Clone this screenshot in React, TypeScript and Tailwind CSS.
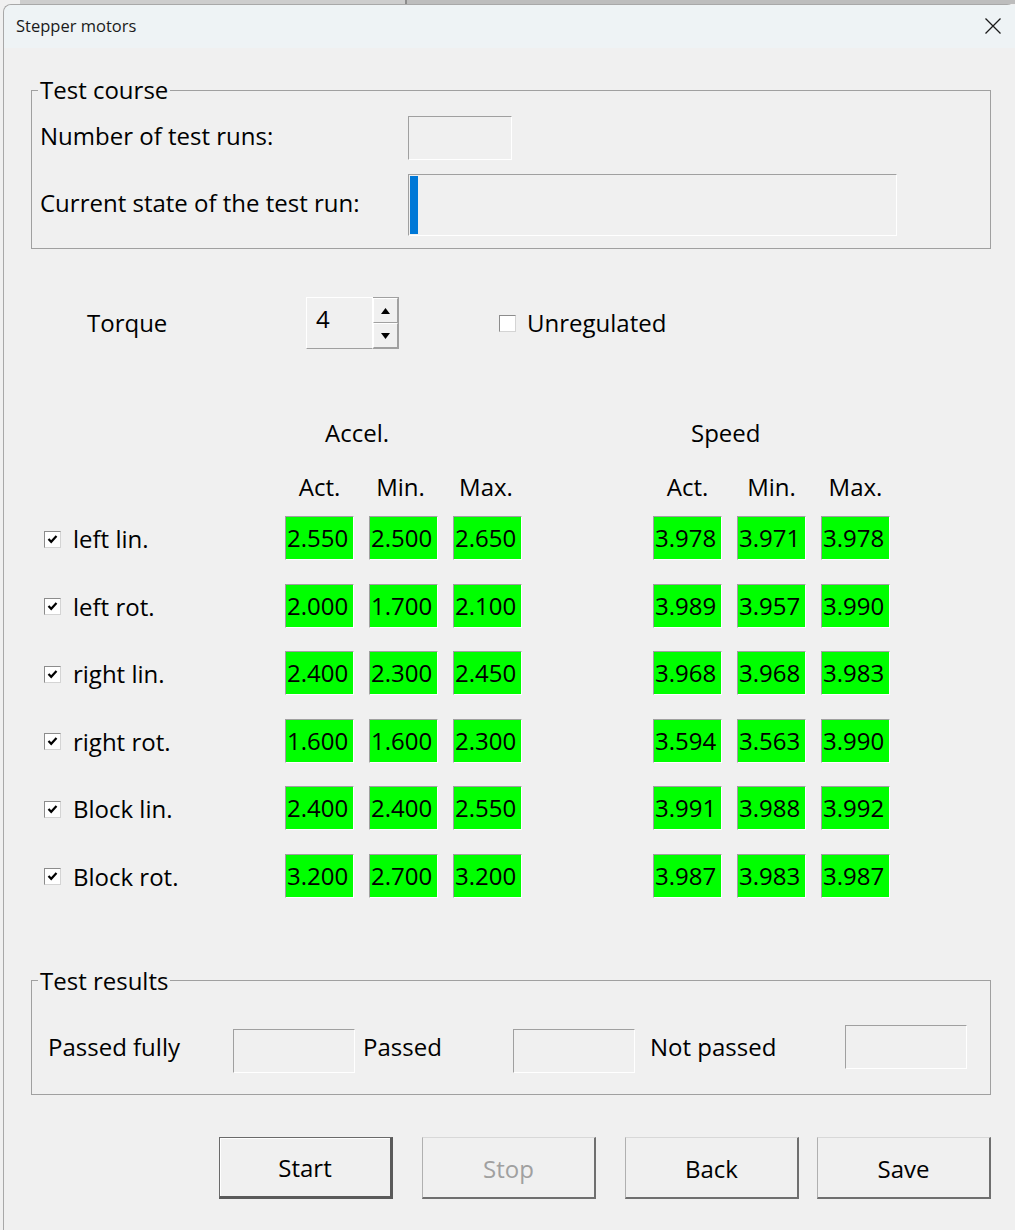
import React from 'react';

const accel = [
  ['2.550', '2.500', '2.650'],
  ['2.000', '1.700', '2.100'],
  ['2.400', '2.300', '2.450'],
  ['1.600', '1.600', '2.300'],
  ['2.400', '2.400', '2.550'],
  ['3.200', '2.700', '3.200'],
];

const speed = [
  ['3.978', '3.971', '3.978'],
  ['3.989', '3.957', '3.990'],
  ['3.968', '3.968', '3.983'],
  ['3.594', '3.563', '3.990'],
  ['3.991', '3.988', '3.992'],
  ['3.987', '3.983', '3.987'],
];

const labels = ['left lin.', 'left rot.', 'right lin.', 'right rot.', 'Block lin.', 'Block rot.'];

function CheckBox({ checked }: { checked?: boolean }) {
  return (
    <div className="flex h-[17px] w-[17px] shrink-0 items-center justify-center border border-[#8c8c8c] border-b-[#d4d4d4] border-r-[#d4d4d4] bg-white">
      {checked && (
        <svg width="11" height="11" viewBox="0 0 11 11">
          <path d="M1.5 5 L4.2 7.8 L9.5 2" fill="none" stroke="#000" strokeWidth="2.2" />
        </svg>
      )}
    </div>
  );
}

function Cell({ value }: { value: string }) {
  return (
    <div className="flex h-[44px] w-[69px] items-center border border-[#a0a0a0] border-b-white border-r-white bg-[#00ff00] pl-[1px] text-[24px] leading-none text-black">
      {value}
    </div>
  );
}

function Sunken({ className }: { className: string }) {
  return <div className={`border border-[#a0a0a0] border-b-white border-r-white ${className}`} />;
}

function Button({ label, isDefault, disabled }: { label: string; isDefault?: boolean; disabled?: boolean }) {
  return (
    <div
      className={
        isDefault
          ? 'flex h-[62px] w-[174px] items-center justify-center border border-[#6a6a6a] border-b-[3px] border-r-[3px] border-b-[#5a5a5a] border-r-[#5a5a5a] bg-[#f0f0f0] pt-[3px] text-[24px] text-black shadow-[inset_1px_1px_0_#ffffff]'
          : `flex h-[62px] w-[174px] items-center justify-center border border-[#d8d8d8] border-l-[#b0b0b0] border-b-2 border-r-2 border-b-[#6f6f6f] border-r-[#6f6f6f] bg-[#f0f0f0] pt-[3px] text-[24px] ${disabled ? 'text-[#a0a0a0]' : 'text-black'}`
      }
    >
      {label}
    </div>
  );
}

export default function App() {
  return (
    <div className="h-[1230px] w-[1015px] overflow-hidden bg-[#f0f0f0] font-['Open_Sans','Noto_Sans',sans-serif] text-black">
      {/* window behind */}
      <div className="flex h-[4px]">
        <div className="w-[20px] bg-[#f0f0f0]" />
        <div className="w-[385px] bg-[#cdcdcd]" />
        <div className="w-[2px] bg-[#8c8c8c]" />
        <div className="flex-1 bg-[#bdbdbd]" />
      </div>

      <div className="ml-[3px] h-[1226px] rounded-t-[8px] border-l border-t border-[#a8a8a8] bg-[#f0f0f0]">
        {/* title bar */}
        <div className="flex h-[43px] items-center justify-between rounded-tl-[8px] bg-[#eef3f5] pb-[1px] pl-[12px] pr-[13px]">
          <span className="text-[16.5px] text-[#1a1a1a]">Stepper motors</span>
          <svg width="18" height="18" viewBox="0 0 18 18">
            <path d="M1.5 1.5 L16.5 16.5 M16.5 1.5 L1.5 16.5" stroke="#1a1a1a" strokeWidth="1.3" fill="none" />
          </svg>
        </div>

        {/* Test course */}
        <fieldset className="ml-[27px] mt-[24px] w-[960px] border border-[#a0a0a0] pb-[12px]">
          <legend className="ml-[6px] px-[2px] text-[24px] leading-[36px]">Test course</legend>
          <div className="mt-[8px] flex h-[44px] items-center">
            <div className="w-[376px] pb-[4px] pl-[8px] text-[24px]">Number of test runs:</div>
            <Sunken className="h-[44px] w-[104px]" />
          </div>
          <div className="mt-[14px] flex h-[62px] items-center">
            <div className="w-[376px] pb-[4px] pl-[8px] text-[24px]">Current state of the test run:</div>
            <div className="flex h-[62px] w-[489px] border border-[#a0a0a0] border-b-white border-r-white p-[1px]">
              <div className="h-full w-[8px] bg-[#0078d7]" />
            </div>
          </div>
        </fieldset>

        {/* torque */}
        <div className="mt-[48px] flex h-[52px] items-center pl-[83px]">
          <div className="w-[219px] text-[24px]">Torque</div>
          <div className="flex h-[52px] w-[93px]">
            <div className="h-full w-[67px] border border-white border-b-[#a0a0a0] pl-[9px] pt-[3px] text-[24px] leading-[36px]">4</div>
            <div className="flex h-full w-[26px] flex-col border border-[#a0a0a0] border-l-0 bg-[#f0f0f0]">
              <div className="flex flex-1 items-center justify-center border border-white border-b-[#a0a0a0] border-r-[#a0a0a0]">
                <svg width="9" height="6" viewBox="0 0 9 6"><path d="M4.5 0 L9 6 L0 6 Z" fill="#000" /></svg>
              </div>
              <div className="flex flex-1 items-center justify-center border border-white border-b-[#a0a0a0] border-r-[#a0a0a0]">
                <svg width="9" height="6" viewBox="0 0 9 6"><path d="M0 0 L9 0 L4.5 6 Z" fill="#000" /></svg>
              </div>
            </div>
          </div>
          <div className="ml-[100px] flex items-center gap-[11px]">
            <CheckBox />
            <span className="text-[24px]">Unregulated</span>
          </div>
        </div>

        {/* measurement grid */}
        <div className="ml-[27px] mt-[66px] grid grid-cols-[239px_69px_69px_69px_101px_69px_69px_69px] gap-x-[15px] text-[24px]">
          <div />
          <div className="col-span-3 pl-[40px] leading-[36px]">Accel.</div>
          <div />
          <div className="col-span-3 pl-[38px] leading-[36px]">Speed</div>

          <div className="col-span-8 h-[18px]" />

          <div />
          <div className="text-center leading-[36px]">Act.</div>
          <div className="pr-[6px] text-center leading-[36px]">Min.</div>
          <div className="pr-[3px] text-center leading-[36px]">Max.</div>
          <div />
          <div className="text-center leading-[36px]">Act.</div>
          <div className="text-center leading-[36px]">Min.</div>
          <div className="text-center leading-[36px]">Max.</div>
        </div>

        <div className="ml-[27px] mt-[11px] flex flex-col gap-y-[23.6px]">
          {labels.map((label, i) => (
            <div
              key={label}
              className="grid grid-cols-[239px_69px_69px_69px_101px_69px_69px_69px] gap-x-[15px]"
            >
              <div className="flex items-center gap-[12px] pl-[13px] pt-[2px] text-[24px]">
                <CheckBox checked />
                <span>{label}</span>
              </div>
              {accel[i].map((v, j) => (
                <Cell key={'a' + j} value={v} />
              ))}
              <div />
              {speed[i].map((v, j) => (
                <Cell key={'s' + j} value={v} />
              ))}
            </div>
          ))}
        </div>

        {/* Test results */}
        <fieldset className="ml-[27px] mt-[65px] w-[960px] border border-[#a0a0a0] pb-[21px]">
          <legend className="ml-[6px] px-[2px] text-[24px] leading-[36px]">Test results</legend>
          <div className="mt-[26px] flex items-start text-[24px]">
            <div className="mt-[4px] w-[201px] pl-[16px] leading-[36px]">Passed fully</div>
            <Sunken className="mt-[4px] h-[44px] w-[122px]" />
            <div className="ml-[8px] mt-[4px] w-[150px] leading-[36px]">Passed</div>
            <Sunken className="mt-[4px] h-[44px] w-[122px]" />
            <div className="ml-[15px] mt-[4px] w-[195px] leading-[36px]">Not passed</div>
            <Sunken className="h-[44px] w-[122px]" />
          </div>
        </fieldset>

        {/* buttons */}
        <div className="ml-[215px] mt-[42px] flex">
          <Button label="Start" isDefault />
          <div className="ml-[29px]">
            <Button label="Stop" disabled />
          </div>
          <div className="ml-[29px]">
            <Button label="Back" />
          </div>
          <div className="ml-[18px]">
            <Button label="Save" />
          </div>
        </div>
      </div>
    </div>
  );
}
